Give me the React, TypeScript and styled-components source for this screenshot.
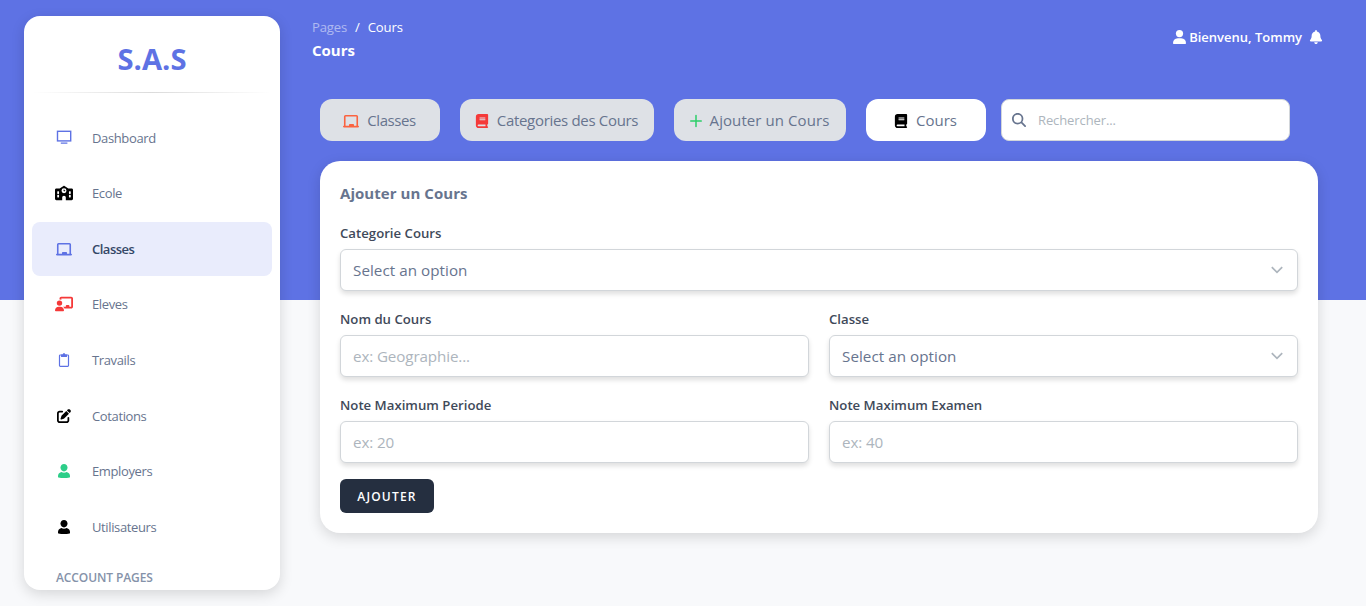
import React from "react";
import styled, { createGlobalStyle, css } from "styled-components";
import {
  FaSchool,
  FaChalkboardUser,
  FaPenToSquare,
  FaBook,
  FaBell,
  FaMagnifyingGlass,
} from "react-icons/fa6";

const GlobalStyle = createGlobalStyle`
  *, *::before, *::after { box-sizing: border-box; }
  html, body { margin: 0; height: 100%; overflow: hidden; }
  body, input, button {
    font-family: "Open Sans", "Noto Sans", sans-serif;
  }
`;

const Page = styled.div`
  display: flex;
  height: 606px;
  overflow: hidden;
  background: linear-gradient(to bottom, #5e72e4 300px, #f8f9fb 300px);
`;

const Sidebar = styled.aside`
  flex: none;
  width: 256px;
  height: 574px;
  margin: 16px 0 0 24px;
  padding: 0 8px;
  overflow: hidden;
  border-radius: 16px;
  background: #fff;
  box-shadow: 0 4px 14px rgba(0, 0, 0, 0.14);
`;

const Brand = styled.div`
  display: flex;
  align-items: center;
  justify-content: center;
  height: 76px;
  padding-top: 9px;
  color: #5e72e4;
  font-size: 29.2px;
  font-weight: 700;
`;

const Divider = styled.hr`
  height: 1px;
  margin: 0;
  border: 0;
  background: linear-gradient(90deg, transparent, rgba(0, 0, 0, 0.14), transparent);
`;

const Nav = styled.nav`
  display: flex;
  flex-direction: column;
  gap: 2px;
  padding-top: 18px;
`;

const NavItem = styled.a<{ $active?: boolean }>`
  display: flex;
  align-items: center;
  height: 53.55px;
  padding-left: 16px;
  border-radius: 8px;
  color: #67748e;
  font-size: 13px;
  letter-spacing: -0.37px;
  ${(p) =>
    p.$active &&
    css`
      background: #e9ecfc;
      color: #344767;
      font-weight: 600;
      letter-spacing: -0.5px;
    `}
`;

const NavIcon = styled.span<{ $color: string }>`
  display: flex;
  align-items: center;
  justify-content: center;
  width: 32px;
  height: 32px;
  margin-right: 12px;
  color: ${(p) => p.$color};
`;

const NavHeading = styled.h6`
  margin: 17px 0 0 24px;
  color: #8592a9;
  font-size: 12px;
  font-weight: 600;
  line-height: 16px;
  letter-spacing: -0.1px;
`;

const Main = styled.main`
  flex: 1;
  padding: 0 48px 0 40px;
`;

const TopBar = styled.header`
  display: flex;
  justify-content: space-between;
  height: 99px;
  margin: 0 -5px 0 -8px;
  padding-top: 17px;
  color: #fff;
`;

const Crumbs = styled.div`
  display: flex;
  gap: 8px;
  font-size: 13.1px;
  line-height: 21px;
  letter-spacing: -0.15px;
`;

const CrumbParent = styled.span`
  opacity: 0.5;
`;

const PageTitle = styled.h6`
  margin: 1px 0 0;
  font-size: 15px;
  font-weight: 700;
  line-height: 22px;
`;

const UserArea = styled.div`
  display: flex;
  align-items: center;
  gap: 3px;
  height: 40px;
  font-size: 13px;
  font-weight: 600;
`;

const BellSlot = styled.span`
  display: flex;
  margin-left: 4px;
`;

const Tabs = styled.div`
  display: flex;
  height: 42px;
`;

const Tab = styled.a<{ $width: number; $tracking?: number; $active?: boolean }>`
  display: flex;
  align-items: center;
  justify-content: center;
  gap: 8px;
  width: ${(p) => p.$width}px;
  margin-right: 20px;
  padding-right: 1px;
  border-radius: 12px;
  background: ${(p) => (p.$active ? "#fff" : "#dee1e6")};
  color: #67748e;
  font-size: 15px;
  letter-spacing: ${(p) => p.$tracking ?? 0}px;
`;

const TabIcon = styled.span<{ $color: string }>`
  display: flex;
  padding-top: 2px;
  color: ${(p) => p.$color};
`;

const Search = styled.label`
  display: flex;
  align-items: center;
  gap: 12px;
  width: 289px;
  margin-left: -5px;
  padding-left: 10px;
  border: 1px solid #d2d6da;
  border-radius: 8px;
  background: #fff;
  color: #67748e;
`;

const SearchInput = styled.input`
  width: 220px;
  padding: 0;
  border: 0;
  outline: 0;
  background: none;
  font-size: 13px;
  letter-spacing: -0.1px;
  &::placeholder { color: #adb5bd; }
`;

const Card = styled.form`
  height: 372px;
  margin-top: 20px;
  padding: 20px;
  border-radius: 20px;
  background: #fff;
  box-shadow: 0 4px 14px rgba(0, 0, 0, 0.14);
`;

const CardTitle = styled.h2`
  margin: 0 0 16px;
  color: #67748e;
  font-size: 15px;
  font-weight: 700;
  line-height: 24px;
  letter-spacing: 0.05px;
`;

const Fields = styled.div`
  display: grid;
  grid-template-columns: 1fr 1fr;
  gap: 16px 20px;
`;

const Field = styled.label<{ $wide?: boolean }>`
  display: flex;
  flex-direction: column;
  grid-column: ${(p) => (p.$wide ? "1 / -1" : "auto")};
`;

const FieldLabel = styled.span`
  height: 28px;
  color: #3f4a5a;
  font-size: 13.2px;
  font-weight: 600;
  line-height: 24px;
`;

const control = css`
  width: 100%;
  height: 42px;
  padding: 0 12px;
  border: 1px solid #d2d6da;
  border-radius: 6px;
  background: #fff;
  box-shadow: 0 3px 5px rgba(0, 0, 0, 0.13);
  font-size: 15.2px;
`;

const Input = styled.input`
  ${control}
  outline: 0;
  letter-spacing: -0.12px;
  &::placeholder { color: #adb5bd; }
`;

const Select = styled.div`
  ${control}
  display: flex;
  align-items: center;
  justify-content: space-between;
  padding-right: 14px;
  color: #67748e;
  letter-spacing: 0.05px;
`;

const Submit = styled.button`
  width: 94px;
  height: 34px;
  margin-top: 16px;
  padding: 0;
  border: 0;
  border-radius: 6px;
  background: #252f40;
  color: #fff;
  font-size: 12px;
  font-weight: 600;
  letter-spacing: 1.2px;
`;

const MonitorIcon = () => (
  <svg width="16" height="15" viewBox="0 0 16 15" fill="none">
    <rect x="1.5" y="1.3" width="13.2" height="9.6" stroke="currentColor" strokeWidth="1.4" />
    <path d="M4.8 13.2h6.6" stroke="currentColor" strokeWidth="1.3" />
  </svg>
);

const LaptopIcon = () => (
  <svg width="16" height="14" viewBox="0 0 16 14" fill="none">
    <path d="M1.75 12V2.5Q1.75 1.75 2.5 1.75H13.5Q14.25 1.75 14.25 2.5V12" stroke="currentColor" strokeWidth="1.6" />
    <path d="M0.8 12.6H15.2" stroke="currentColor" strokeWidth="1.6" strokeLinecap="round" />
    <path d="M6 13V10.8Q6 10.1 6.7 10.1H10.3Q11 10.1 11 10.8V13Z" fill="currentColor" />
  </svg>
);

const ClipboardIcon = () => (
  <svg width="12" height="14" viewBox="0 0 12 14" fill="none">
    <rect x="1.5" y="2" width="9" height="11.4" rx="0.8" stroke="currentColor" strokeWidth="1.2" />
    <path d="M3 1.5H4.6Q5 0 6 0T7.4 1.5H9V3.4Q9 4 8.4 4H3.6Q3 4 3 3.4Z" fill="currentColor" />
  </svg>
);

const PersonIcon = () => (
  <svg width="12" height="14" viewBox="0 0 12 14" fill="currentColor">
    <path d="M6 0C8.1 0 9.5 1.6 9.5 3.6S8 7.4 6 7.4 2.5 5.6 2.5 3.6 3.9 0 6 0Z" />
    <path d="M3.3 8.1Q6 9.5 8.7 8.1Q12 9.3 12 12V13Q12 13.4 11.6 13.5Q6 14.5 .4 13.5Q0 13.4 0 13V12Q0 9.3 3.3 8.1Z" />
  </svg>
);

const AccountIcon = () => (
  <svg width="13" height="14" viewBox="0 0 13 14" fill="currentColor">
    <circle cx="6.5" cy="3.6" r="3.6" />
    <path d="M4.8 8.3H8.2Q13 8.7 13 13.2Q13 14 12.2 14H.8Q0 14 0 13.2Q0 8.7 4.8 8.3Z" />
  </svg>
);

const PlusIcon = () => (
  <svg width="12" height="14" viewBox="0 0 12 14" fill="none">
    <path d="M.7 7H11.3M6 1.5V12.5" stroke="currentColor" strokeWidth="1.5" strokeLinecap="round" />
  </svg>
);

const Chevron = () => (
  <svg width="12" height="8" viewBox="0 0 12 8" fill="none">
    <path d="M.8 1.2L6 6.4L11.2 1.2" stroke="#adb5bd" strokeWidth="1.7" />
  </svg>
);

const navItems = [
  { label: "Dashboard", color: "#5e72e4", icon: <MonitorIcon /> },
  { label: "Ecole", color: "#000", icon: <FaSchool size={18} /> },
  { label: "Classes", color: "#5e72e4", icon: <LaptopIcon />, active: true },
  { label: "Eleves", color: "#f53939", icon: <FaChalkboardUser size={18} /> },
  { label: "Travails", color: "#5e72e4", icon: <ClipboardIcon /> },
  { label: "Cotations", color: "#000", icon: <FaPenToSquare size={14} /> },
  { label: "Employers", color: "#2dce89", icon: <PersonIcon /> },
  { label: "Utilisateurs", color: "#000", icon: <PersonIcon /> },
];

const tabs = [
  { label: "Classes", color: "#fb6340", icon: <LaptopIcon />, width: 120, tracking: -0.45 },
  { label: "Categories des Cours", color: "#f53939", icon: <FaBook size={14} />, width: 194, tracking: -0.32 },
  { label: "Ajouter un Cours", color: "#2dce6a", icon: <PlusIcon />, width: 172, tracking: 0.08 },
  { label: "Cours", color: "#000", icon: <FaBook size={14} />, width: 120, active: true },
];

export default function App() {
  return (
    <>
      <GlobalStyle />
      <Page>
        <Sidebar>
          <Brand>S.A.S</Brand>
          <Divider />
          <Nav>
            {navItems.map((item) => (
              <NavItem key={item.label} $active={item.active}>
                <NavIcon $color={item.color}>{item.icon}</NavIcon>
                {item.label}
              </NavItem>
            ))}
          </Nav>
          <NavHeading>ACCOUNT PAGES</NavHeading>
        </Sidebar>
        <Main>
          <TopBar>
            <div>
              <Crumbs>
                <CrumbParent>Pages</CrumbParent>
                <span>/</span>
                <span>Cours</span>
              </Crumbs>
              <PageTitle>Cours</PageTitle>
            </div>
            <UserArea>
              <AccountIcon />
              <span>Bienvenu, Tommy</span>
              <BellSlot>
                <FaBell size={14} />
              </BellSlot>
            </UserArea>
          </TopBar>
          <Tabs>
            {tabs.map((tab) => (
              <Tab key={tab.label} $width={tab.width} $tracking={tab.tracking} $active={tab.active}>
                <TabIcon $color={tab.color}>{tab.icon}</TabIcon>
                {tab.label}
              </Tab>
            ))}
            <Search>
              <FaMagnifyingGlass size={14} />
              <SearchInput placeholder="Rechercher..." />
            </Search>
          </Tabs>
          <Card>
            <CardTitle>Ajouter un Cours</CardTitle>
            <Fields>
              <Field $wide>
                <FieldLabel>Categorie Cours</FieldLabel>
                <Select>
                  Select an option
                  <Chevron />
                </Select>
              </Field>
              <Field>
                <FieldLabel>Nom du Cours</FieldLabel>
                <Input placeholder="ex: Geographie..." />
              </Field>
              <Field>
                <FieldLabel>Classe</FieldLabel>
                <Select>
                  Select an option
                  <Chevron />
                </Select>
              </Field>
              <Field>
                <FieldLabel>Note Maximum Periode</FieldLabel>
                <Input placeholder="ex: 20" />
              </Field>
              <Field>
                <FieldLabel>Note Maximum Examen</FieldLabel>
                <Input placeholder="ex: 40" />
              </Field>
            </Fields>
            <Submit type="button">AJOUTER</Submit>
          </Card>
        </Main>
      </Page>
    </>
  );
}
